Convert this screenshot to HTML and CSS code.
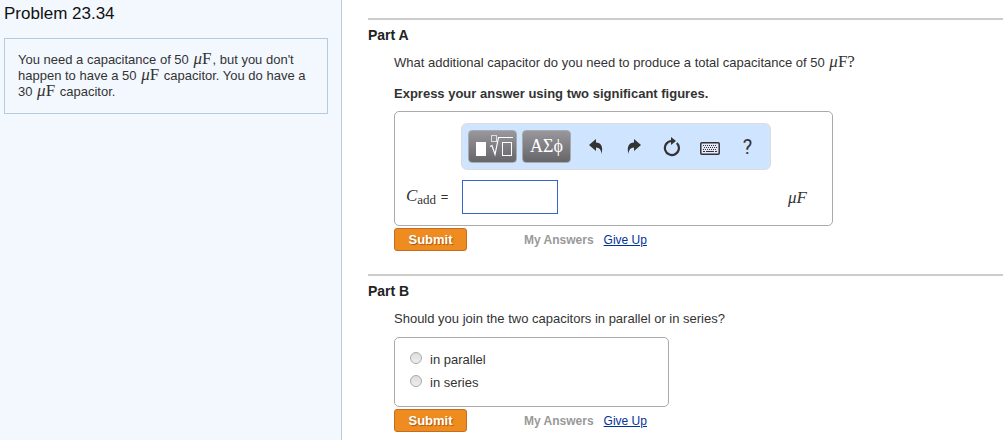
FILE: index.html
```html
<!DOCTYPE html>
<html lang="en">
<head>
    <meta charset="UTF-8">
    <meta name="viewport" content="width=device-width, initial-scale=1.0">
    <title>Problem 23.34</title>
    <link rel="stylesheet" href="styles.css">
</head>
<body>
    <aside class="sidebar">
        <h1>Problem 23.34</h1>
        <div class="problem-text">
            You need a capacitance of 50 <span class="math"><i>μ</i>F</span>, but you don't happen to have a 50 <span class="math"><i>μ</i>F</span> capacitor. You do have a 30 <span class="math"><i>μ</i>F</span> capacitor.
        </div>
    </aside>

    <main>
        <!-- Part A -->
        <section class="part">
            <h2>Part A</h2>
            <form class="part-body">
                <p class="question">What additional capacitor do you need to produce a total capacitance of 50 <span class="math"><i>μ</i>F?</span></p>
                <p class="instructions">Express your answer using two significant figures.</p>

                <div class="answer-box">
                    <div class="toolbar">
                        <button type="button" class="palette-button" aria-label="Templates">
                            <svg width="40" height="26" viewBox="0 0 40 26">
                                <rect x="3" y="8" width="10" height="14" fill="#fff"/>
                                <rect x="18.5" y="1.5" width="5" height="6" fill="none" stroke="#ddd"/>
                                <path d="M17 12.5l2-1 3 9 3.500-17H40" fill="none" stroke="#fff" stroke-width="1.2"/>
                                <rect x="29.5" y="8.500" width="9" height="13" fill="none" stroke="#fff"/>
                            </svg>
                        </button>
                        <button type="button" class="palette-button greek">ΑΣϕ</button>
                        <div class="tools">
                            <button type="button" class="tool-button" aria-label="Undo">
                                <svg width="16" height="18" viewBox="0 0 16 18">
                                    <path d="M1 7L8 1v3.5c5 .3 7.500 4 5.500 11.500C13 11.500 11.500 9.800 8 9.600V13z" fill="#333"/>
                                </svg>
                            </button>
                            <button type="button" class="tool-button" aria-label="Redo">
                                <svg width="16" height="18" viewBox="0 0 16 18">
                                    <path d="M15 7L8 1v3.5C3 4.800.5 8.500 2.500 16 3 11.500 4.500 9.800 8 9.600V13z" fill="#333"/>
                                </svg>
                            </button>
                            <button type="button" class="tool-button" aria-label="Reset">
                                <svg width="18" height="20" viewBox="0 0 18 20">
                                    <path d="M13.8 6A7 7 0 1 1 8.500 4" fill="none" stroke="#333" stroke-width="2.2"/>
                                    <path d="M8 0l5 4-5 4z" fill="#333"/>
                                </svg>
                            </button>
                            <button type="button" class="tool-button keyboard" aria-label="Keyboard shortcuts">
                                <svg width="20" height="13" viewBox="0 0 20 13">
                                    <rect x=".8" y=".8" width="18.4" height="11.4" rx="1" fill="#e4e8fa" stroke="#333" stroke-width="1.5"/>
                                    <path d="M3 3.500h14M4 5.500h13M3 7.500h14" fill="none" stroke="#333" stroke-dasharray="1 1"/>
                                    <path d="M3 9.500h2m1 0h8m1 0h2" fill="none" stroke="#333"/>
                                </svg>
                            </button>
                            <button type="button" class="tool-button help" aria-label="Help">?</button>
                        </div>
                    </div>
                    <div class="answer-row">
                        <label for="cadd"><span class="math"><i>C</i><sub>add</sub></span> =</label>
                        <input type="text" id="cadd" class="answer-input">
                        <span class="math unit"><i>μF</i></span>
                    </div>
                </div>

                <div class="actions">
                    <button type="button" class="submit">Submit</button>
                    <span class="my-answers">My Answers</span>
                    <a href="#">Give Up</a>
                </div>
            </form>
        </section>

        <!-- Part B -->
        <section class="part">
            <h2>Part B</h2>
            <form class="part-body">
                <p class="question">Should you join the two capacitors in parallel or in series?</p>

                <div class="choices">
                    <label><input type="radio" name="join" value="parallel">in parallel</label>
                    <label><input type="radio" name="join" value="series">in series</label>
                </div>

                <div class="actions">
                    <button type="button" class="submit">Submit</button>
                    <span class="my-answers">My Answers</span>
                    <a href="#">Give Up</a>
                </div>
            </form>
        </section>
    </main>
</body>
</html>
```
FILE: styles.css
```css
* {
    box-sizing: border-box;
}

body {
    display: flex;
    min-height: 100vh;
    margin: 0;
    font-family: "Liberation Sans", Arial, sans-serif;
    font-size: 13px;
    line-height: 16px;
    color: #333;
    background-color: #fff;
}

/* Left column */
.sidebar {
    flex: 0 0 342px;
    padding: 4px 13px 0 4px;
    background-color: #f3f8ff;
    border-right: 1px solid #b9cbdf;
}

h1 {
    margin: 0 0 14px;
    font-size: 17px;
    line-height: 20px;
    font-weight: normal;
    color: #111;
}

.problem-text {
    min-height: 76px;
    padding: 13px;
    border: 1px solid #b7cadb;
}

.math {
    margin: 0 1px;
    font-family: "Liberation Serif", "Times New Roman", serif;
    font-size: 17px;
    line-height: 1px;
}

/* Right column */
main {
    flex: 1;
    padding: 18px 0 0 26px;
}

.part {
    border-top: 2px solid #ccc;
    padding-top: 7px;
    margin-bottom: 23px;
}

h2 {
    margin: 0;
    font-size: 14px;
    line-height: 16px;
    color: #222;
}

.part-body {
    margin: 0 0 0 26px;
}

.question {
    margin: 0;
    padding-top: 12px;
}

.instructions {
    margin: 15px 0 0;
    font-weight: bold;
}

.answer-box,
.choices {
    border: 1px solid #aaa;
    border-radius: 5px;
}

.answer-box {
    max-width: 439px;
    margin-top: 9px;
    padding: 11px 24px 11px 11px;
}

.toolbar {
    display: flex;
    align-items: center;
    gap: 5px;
    width: 310px;
    height: 47px;
    margin-left: 55px;
    padding: 0 6px;
    background-color: #cfe5ff;
    border: 1px solid #dcdcdc;
    border-radius: 6px;
}

button {
    padding: 0;
    border: none;
    font-family: inherit;
    cursor: pointer;
}

.palette-button {
    width: 49px;
    height: 33px;
    color: #fff;
    background: linear-gradient(#98989c, #66666a);
    border: 1px solid #aaa;
    border-radius: 4px;
}

.palette-button svg {
    display: block;
    margin: auto;
}

.greek {
    font-family: "Liberation Serif", "Times New Roman", serif;
    font-size: 18px;
}

.tools {
    display: flex;
    gap: 5px;
    padding-left: 3px;
}

.tool-button {
    display: flex;
    align-items: center;
    justify-content: center;
    width: 33px;
    height: 33px;
    color: #333;
    background: none;
}

.keyboard {
    padding-top: 3px;
}

.help {
    font-family: Roboto, sans-serif;
    font-size: 20px;
}

.answer-row {
    display: flex;
    align-items: center;
    margin-top: 10px;
}

.answer-row label {
    width: 56px;
}

.answer-row .math {
    margin-left: 0;
    font-size: 17px;
}

.answer-row sub {
    font-size: 13px;
    line-height: 1px;
    vertical-align: -3px;
}

.answer-input {
    width: 96px;
    height: 34px;
    padding: 4px;
    border: 1px solid #36c;
    font-size: 13px;
}

.answer-row .unit {
    margin-left: auto;
}

.actions {
    display: flex;
    align-items: center;
    margin-top: 2px;
}

.submit {
    width: 73px;
    height: 23px;
    margin-right: 57px;
    font-size: 13px;
    font-weight: bold;
    color: #fff;
    text-shadow: 1px 1px 1px #a65a10;
    background-color: #ef8c1f;
    border: 1px solid #c46d22;
    border-radius: 3px;
}

.my-answers {
    margin-right: 10px;
    font-size: 12px;
    font-weight: bold;
    color: #999;
}

.actions a {
    font-size: 12px;
    color: #039;
}

/* Multiple choice */
.choices {
    display: flex;
    flex-direction: column;
    gap: 7px;
    max-width: 275px;
    min-height: 70px;
    margin-top: 10px;
    padding: 14px 15px;
}

.choices label {
    display: flex;
    align-items: center;
    gap: 8px;
}

.choices input {
    appearance: none;
    width: 12px;
    height: 12px;
    margin: 0 0 4px;
    background: linear-gradient(#ddd, #eee);
    border: 1px solid #aaa;
    border-radius: 50%;
}
```
